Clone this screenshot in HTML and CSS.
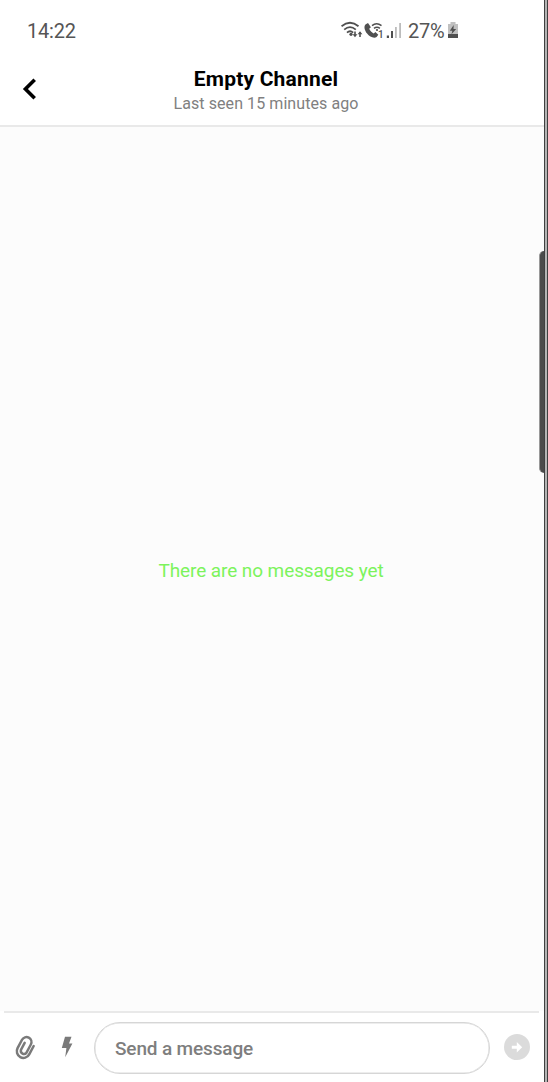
FILE: index.html
```html
<!DOCTYPE html>
<html lang="en">
<head>
<meta charset="utf-8">
<title>Empty Channel</title>
<link rel="stylesheet" href="styles.css">
</head>
<body>
<div class="phone">
  <main class="screen">
    <div class="status">
      <span class="time">14:22</span>
      <div class="indicators">
        <svg class="signals" width="62" height="20" viewBox="341 20 62 20">
          <g fill="none" stroke="#505050" stroke-width="1.8">
            <path d="M341.500 26.200Q350 19.200 358.500 26.200M344.200 29.600Q350 24.700 355.800 29.600M347 32.600Q350 30 353.200 32.600"/>
            <path stroke-width="1.500" d="M372 25.600Q376.500 21.700 381.500 25.600M374 28.400Q377 26 379.900 28.400"/>
            <path stroke-width="1.600" d="M355 31.500v4.500M360 37v-4.500"/>
          </g>
          <g fill="#505050">
            <circle cx="351" cy="34.300" r="1.600"/>
            <path d="M352.600 34.200h4.800l-2.400 3.100zM357.600 34.300h4.800l-2.400-3.100z"/>
            <path d="M365.800 24.200l2.200-1.200 2.900 4.200-1.700 1.600c1 2.200 2.400 3.600 4.500 4.600l1.700-1.500 2.900 2.800-1.700 2.400c-2.800 1.900-7.100-.4-9.500-3.500-2.500-3.200-3.700-7.400-1.300-9.400z"/>
            <circle cx="377" cy="30" r="1.100"/>
            <path d="M386.800 35.500h2.200v2.500h-2.200zM391 31h2v7h-2z"/>
            <text class="sim" x="378" y="37.500">1</text>
          </g>
          <path fill="#bcbcbc" d="M395 27h1.800v11H395zM399.200 23h1.800v15h-1.800z"/>
        </svg>
        <span class="percent">27%</span>
        <svg class="battery" width="12" height="18" viewBox="0 0 12 18">
          <path fill="#c0c0c0" d="M3.500 1h5v2H11v10H1V3h2.500z"/>
          <path fill="#505050" d="M1 13h10v4H1zM6.700 4 2.800 9.700h2.500L4.500 13.300 9.200 8.100H6.500z"/>
        </svg>
      </div>
    </div>
    <header class="header">
      <svg class="back" width="16" height="24" viewBox="0 0 16 24"><path d="M13.700 2.700 4.400 12l9.300 9.300" fill="none" stroke="#000" stroke-width="3.600"/></svg>
      <div class="heading">
        <h1 class="title">Empty Channel</h1>
        <p class="seen">Last seen 15 minutes ago</p>
      </div>
    </header>
    <section class="messages"><p class="empty">There are no messages yet</p></section>
    <footer class="composer">
      <svg class="clip" width="22" height="28" viewBox="0 0 22 28">
        <path transform="translate(11.500 13.300) rotate(28)" fill="none" stroke="#7a7a7a" stroke-width="2.500" stroke-linecap="round" d="M6.600-5V4.500A6.600 6.600 0 0 1-6.600 4.500V-5A5 5 0 0 1 3.400-5V4.500A3.200 3.200 0 0 1-2.800 4.500V-3.500"/>
      </svg>
      <svg class="bolt" width="12" height="22" viewBox="0 0 12 22"><path fill="#7a7a7a" d="M4 .7h6.500L8 7.500h3.400L4.200 21.300 5.400 12H.8z"/></svg>
      <div class="field">Send a message</div>
      <svg class="send" width="26" height="26" viewBox="0 0 26 26"><circle cx="13" cy="13" r="13" fill="#dbdbdb"/><path fill="#fff" d="M7.800 11.800h5V8l5.400 5.300-5.400 5.200v-3.700h-5z"/></svg>
    </footer>
    <div class="edge-panel"></div>
  </main>
  <div class="frame"></div>
</div>
</body>
</html>
```
FILE: styles.css
```css
* { box-sizing: border-box; }
body { margin: 0; font-family: Roboto, sans-serif; background: #fff; }
h1, p { margin: 0; }
svg { display: block; flex: none; }
.phone { display: flex; width: 548px; height: 1082px; overflow: hidden; }
.screen { position: relative; display: flex; flex-direction: column; width: 544px; background: #fff; }
.frame { width: 4px; background: #b4b4b4; border-left: 1px solid #404040; border-right: 1px solid #404040; }
.status { display: flex; justify-content: space-between; height: 62px; padding: 0 85px 0 27px; color: #555; }
.time { padding-top: 19px; font-size: 20px; line-height: 24px; letter-spacing: -.2px; }
.indicators { display: flex; align-items: flex-start; padding-top: 20px; }
.sim { font: 500 10px Roboto, sans-serif; }
.percent { width: 39px; margin-left: 5px; margin-top: -1px; font-size: 20px; line-height: 24px; letter-spacing: -.3px; white-space: nowrap; }
.battery { margin-top: 1px; }
.header { display: flex; height: 65px; padding-left: 21px; border-bottom: 2px solid #e9e9e9; }
.back { margin-top: 15px; }
.heading { width: 458px; text-align: center; }
.title { padding-top: 4px; font-size: 21px; line-height: 26px; font-weight: 700; letter-spacing: .2px; color: #000; }
.seen { padding-top: 2px; font-size: 16px; line-height: 20px; letter-spacing: .08px; color: #808080; }
.messages { display: flex; flex: 1; justify-content: center; padding: 432px 2px 0 0; background: #fcfcfc; }
.empty { height: 24px; font-size: 19px; line-height: 24px; letter-spacing: -.09px; color: #7cf35c; }
.composer { display: flex; height: 71px; margin: 0 5px 0 4px; border-top: 2px solid #e9e9e9; }
.clip { margin: 21px 0 0 10px; }
.bolt { margin: 23px 0 0 25px; }
.field { width: 396px; height: 52px; margin: 9px 0 0 21px; padding-left: 20px; border: 1px solid #d6d6d6; box-shadow: inset 0 0 0 .5px #dbdbdb; border-radius: 26px; font-size: 19px; font-weight: 500; line-height: 52px; letter-spacing: -.15px; color: #7e7e7e; }
.send { margin: 21px 0 0 14px; }
.edge-panel { position: absolute; top: 251px; right: 0; width: 5px; height: 222px; border-left: 1px solid #999; border-radius: 5px 0 0 5px; background: #4b4b4b; }
```
